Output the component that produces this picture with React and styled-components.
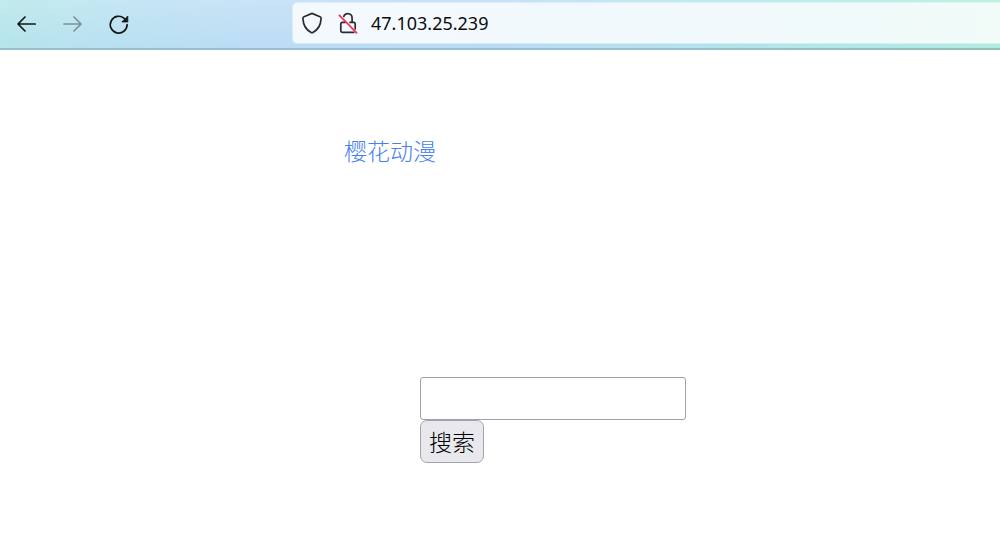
import React, { useState } from 'react'
import styled, { createGlobalStyle } from 'styled-components'

const GlobalStyle = createGlobalStyle`
    * {
        box-sizing: border-box;
    }

    body {
        margin: 0;
        background: #fff;
        font-family: "Noto Sans CJK SC", sans-serif;
    }
`

const Toolbar = styled.header`
    display: flex;
    align-items: center;
    height: 50px;
    padding: 0 0 2px 4px;
    border-bottom: 2px solid #9dbfd2;
    border-image: linear-gradient(90deg, #98bfc9, #9cbcd5 35%, #9bbfd0 60%, #90c2b4) 1;
    background:
        linear-gradient(180deg, rgba(255, 255, 255, 0.1), rgba(120, 190, 230, 0.1)),
        linear-gradient(100deg, #bbe9ea 0%, #bfe4f2 10%, #c3e0f6 25%, #c0dff6 50%, #b9e9ea 78%, #b7f0e1 100%);
`

const NavButtons = styled.nav`
    display: flex;
    flex: 0 0 auto;
    margin-right: 150px;
`

const NavButton = styled.button`
    display: flex;
    align-items: center;
    justify-content: center;
    width: 46px;
    height: 40px;
    padding: 2px 0 0;
    border: none;
    background: none;
    color: #15181a;

    &:disabled {
        color: #7b929c;
    }
`

const AddressBar = styled.div`
    display: flex;
    flex: 1;
    align-items: center;
    gap: 13px;
    height: 42px;
    padding-left: 8px;
    border: 1px solid rgba(255, 255, 255, 0.4);
    border-right: none;
    border-radius: 5px 0 0 5px;
    background: linear-gradient(100deg, #f4f9fe 0%, #f1f9fc 60%, #f1fbf8 100%);
    background-clip: padding-box;
`

const AddressInput = styled.input`
    flex: 1;
    min-width: 0;
    padding: 0;
    border: none;
    outline: none;
    background: none;
    color: #0c0c0d;
    font: 18px/24px "Noto Sans", sans-serif;
`

const Page = styled.main`
    padding-top: 83px;
`

const Title = styled.a`
    display: block;
    width: max-content;
    margin-left: 34.4%;
    color: #4580ee;
    font-size: 23px;
    font-weight: 300;
    line-height: 34px;
    text-decoration: none;
`

const SearchForm = styled.form`
    display: flex;
    flex-direction: column;
    align-items: flex-start;
    margin: 210px 0 0 42%;
`

const SearchInput = styled.input`
    width: 266px;
    height: 43px;
    padding: 4px 8px;
    border: 1px solid #a09fab;
    border-radius: 3px;
    background: #fff;
    font: 300 23px "Noto Sans CJK SC", sans-serif;
`

const SearchButton = styled.button`
    height: 43px;
    padding: 0 8px 2px;
    border: 1px solid #a3a2ae;
    border-radius: 7px;
    background: #e9e9ed;
    color: #000;
    font: 300 23px/34px "Noto Sans CJK SC", sans-serif;
`

const ArrowIcon = ({ forward }) => (
    <svg width="20" height="20" viewBox="0 0 20 20" fill="none" stroke="currentColor" strokeWidth="1.7" strokeLinecap="round" strokeLinejoin="round">
        <path d={forward ? 'M1 10h17M11 3l7 7-7 7' : 'M18.2 10h-17M8 3l-7 7 7 7'} />
    </svg>
)

const ReloadIcon = () => (
    <svg width="22" height="22" viewBox="0 0 22 22" fill="none">
        <path d="M19.1 11.7a8.4 8.4 0 1 1-2.9-6.4L18 7" stroke="currentColor" strokeWidth="1.7" strokeLinecap="round" />
        <path d="M19.8 3v6h-6z" fill="currentColor" stroke="currentColor" strokeWidth="0.8" strokeLinejoin="round" />
    </svg>
)

const ShieldIcon = () => (
    <svg width="22" height="22" viewBox="0 0 22 22" fill="none" stroke="#2b2c31" strokeWidth="1.7" strokeLinejoin="round">
        <path d="M11 1.4 19 4.8q1.2.5 1.1 1.8C19.7 13.4 16.6 18 11.9 20.4q-.9.5-1.8 0C5.4 18 2.3 13.4 1.9 6.6q-.1-1.3 1.1-1.8z" />
    </svg>
)

const InsecureLockIcon = () => (
    <svg width="22" height="22" viewBox="0 0 22 22" fill="none" strokeLinecap="round">
        <path d="M9 10.4H6.4a1.6 1.6 0 0 0-1.6 1.6v6.8a1.6 1.6 0 0 0 1.6 1.6h11.4M14 10.4h3.6a1.6 1.6 0 0 1 1.6 1.6v4.8M7.8 4.4a4.3 4.3 0 0 1 8.3 1.5v4.3" stroke="#2b2c31" strokeWidth="1.7" />
        <path d="M3.4 3.4 20.6 20.8" stroke="#f0325c" strokeWidth="1.7" />
    </svg>
)

function App() {

    const [address, setAddress] = useState('47.103.25.239');
    const [keyword, setKeyword] = useState('');

    return (
        <>
            <GlobalStyle />
            <Toolbar>
                <NavButtons>
                    <NavButton type="button" aria-label="后退"><ArrowIcon /></NavButton>
                    <NavButton type="button" aria-label="前进" disabled><ArrowIcon forward /></NavButton>
                    <NavButton type="button" aria-label="刷新"><ReloadIcon /></NavButton>
                </NavButtons>
                <AddressBar>
                    <ShieldIcon />
                    <InsecureLockIcon />
                    <AddressInput
                        aria-label="地址"
                        value={address}
                        onChange={(e) => setAddress(e.target.value)}
                    />
                </AddressBar>
            </Toolbar>
            <Page>
                <Title href="/">樱花动漫</Title>
                <SearchForm onSubmit={(e) => e.preventDefault()}>
                    <SearchInput
                        type="text"
                        aria-label="搜索"
                        value={keyword}
                        onChange={(e) => setKeyword(e.target.value)}
                    />
                    <SearchButton type="submit">搜索</SearchButton>
                </SearchForm>
            </Page>
        </>
    )
}

export default App
